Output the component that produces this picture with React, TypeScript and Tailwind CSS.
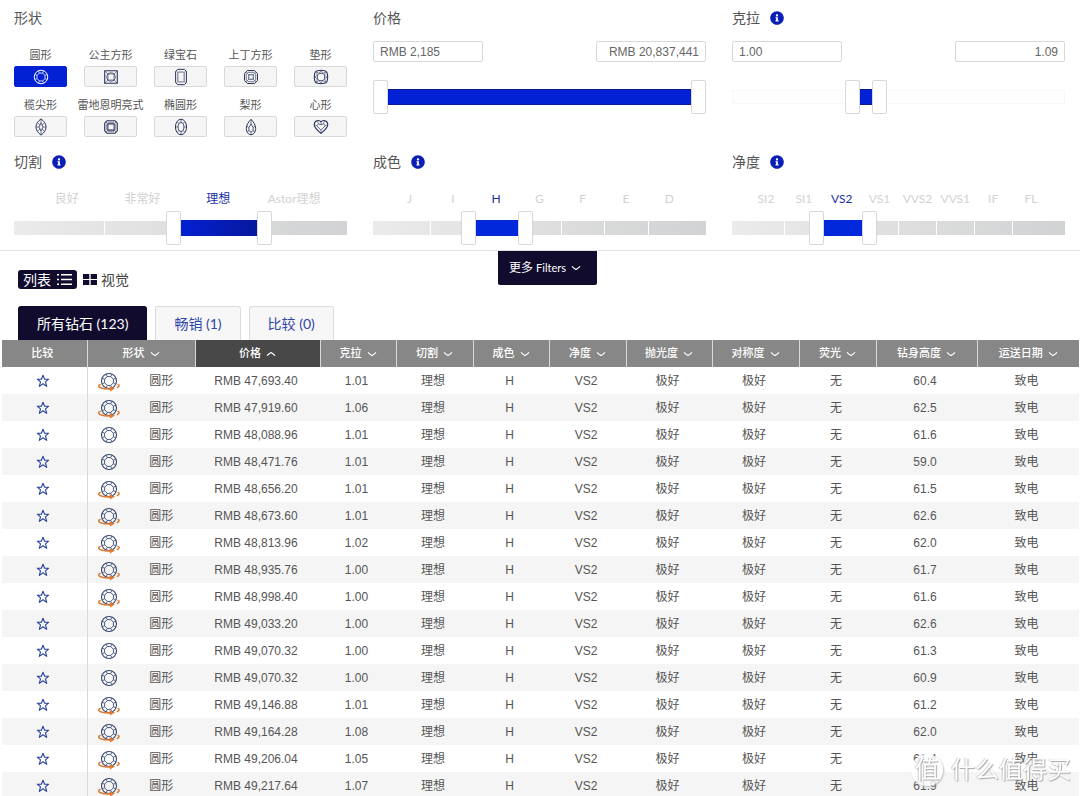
import { useState } from "react";
import { FaInfoCircle } from "react-icons/fa";
import clsx from "clsx";

type ShapeId =
  | "round"
  | "princess"
  | "emerald"
  | "asscher"
  | "cushion"
  | "marquise"
  | "radiant"
  | "oval"
  | "pear"
  | "heart";

interface Shape {
  id: ShapeId;
  label: string;
}

interface Diamond {
  price: string;
  carat: string;
  depth: string;
  has360: boolean;
}

const shapes: Shape[] = [
  { id: "round", label: "圆形" },
  { id: "princess", label: "公主方形" },
  { id: "emerald", label: "绿宝石" },
  { id: "asscher", label: "上丁方形" },
  { id: "cushion", label: "垫形" },
  { id: "marquise", label: "榄尖形" },
  { id: "radiant", label: "雷地恩明亮式" },
  { id: "oval", label: "椭圆形" },
  { id: "pear", label: "梨形" },
  { id: "heart", label: "心形" },
];

const diamonds: Diamond[] = [
  { price: "47,693.40", carat: "1.01", depth: "60.4", has360: true },
  { price: "47,919.60", carat: "1.06", depth: "62.5", has360: true },
  { price: "48,088.96", carat: "1.01", depth: "61.6", has360: false },
  { price: "48,471.76", carat: "1.01", depth: "59.0", has360: false },
  { price: "48,656.20", carat: "1.01", depth: "61.5", has360: true },
  { price: "48,673.60", carat: "1.01", depth: "62.6", has360: true },
  { price: "48,813.96", carat: "1.02", depth: "62.0", has360: true },
  { price: "48,935.76", carat: "1.00", depth: "61.7", has360: true },
  { price: "48,998.40", carat: "1.00", depth: "61.6", has360: true },
  { price: "49,033.20", carat: "1.00", depth: "62.6", has360: false },
  { price: "49,070.32", carat: "1.00", depth: "61.3", has360: false },
  { price: "49,070.32", carat: "1.00", depth: "60.9", has360: false },
  { price: "49,146.88", carat: "1.01", depth: "61.2", has360: true },
  { price: "49,164.28", carat: "1.08", depth: "62.0", has360: true },
  { price: "49,206.04", carat: "1.05", depth: "61.4", has360: true },
  { price: "49,217.64", carat: "1.07", depth: "61.9", has360: true },
];

const columns = [
  { label: "比较", width: "w-[85px]" },
  { label: "形状", width: "w-[108px]", sort: "down" },
  { label: "价格", width: "w-[125px]", sort: "up" },
  { label: "克拉", width: "w-[76px]", sort: "down" },
  { label: "切割", width: "w-[77px]", sort: "down" },
  { label: "成色", width: "w-[76px]", sort: "down" },
  { label: "净度", width: "w-[77px]", sort: "down" },
  { label: "抛光度", width: "w-[86px]", sort: "down" },
  { label: "对称度", width: "w-[87px]", sort: "down" },
  { label: "荧光", width: "w-[77px]", sort: "down" },
  { label: "钻身高度", width: "w-[101px]", sort: "down" },
  { label: "运送日期", width: "w-[102px]", sort: "down" },
];

const tabs = ["所有钻石 (123)", "畅销 (1)", "比较 (0)"];

const RoundCut = () => (
  <>
    <circle cx="10" cy="10" r="7.5" strokeWidth="1.1" />
    <path d="M8.200 5.600h3.600l2.600 2.600v3.600l-2.600 2.600H8.200l-2.600-2.600V8.200z" strokeWidth=".9" />
    <path
      d="M8.200 5.600 7.100 3.100M11.800 5.600l1.100-2.500M14.400 8.200l2.500-1.100M14.400 11.800l2.500 1.100M11.800 14.400l1.100 2.500M8.200 14.400l-1.100 2.500M5.600 11.800l-2.500 1.100M5.600 8.200 3.100 7.100"
      strokeWidth=".8"
    />
  </>
);

const shapePaths: Record<ShapeId, React.ReactNode> = {
  round: <RoundCut />,
  princess: (
    <>
      <path d="M3 3h14v14H3z" strokeWidth="1.2" />
      <path d="M6.5 6.5h7v7h-7z" />
      <path d="m3 3 3.5 3.5M17 3l-3.5 3.5M3 17l3.5-3.5M17 17l-3.5-3.5M10 4.500l3.500 2M10 4.500l-3.500 2M10 15.500l3.500-2M10 15.500l-3.500-2M4.500 10l2-3.500M4.500 10l2 3.500M15.500 10l-2-3.500M15.500 10l-2 3.500" strokeWidth=".6" />
    </>
  ),
  emerald: (
    <>
      <path d="M6.2 1.500h7.6L16 3.700v12.6l-2.200 2.200H6.2L4 16.300V3.700z" strokeWidth="1.1" />
      <path d="M7.2 4.500h5.6l.7.7v9.6l-.7.7H7.2l-.7-.7V5.2z" strokeWidth=".8" />
      <path d="m4.500 3.200 2 1.600M15.500 3.200l-2 1.600M4.500 16.800l2-1.600M15.500 16.800l-2-1.600" strokeWidth=".6" />
    </>
  ),
  asscher: (
    <>
      <path d="M6 2.800h8L17.200 6v8L14 17.200H6L2.800 14V6z" strokeWidth="1.100" />
      <path d="M6.800 4.800h6.400l2 2v6.400l-2 2H6.800l-2-2V6.800z" strokeWidth=".7" />
      <path d="M7.500 7.500h5v5h-5z" />
      <path d="m4.500 4.500 3 3M15.500 4.500l-3 3M4.500 15.500l3-3M15.500 15.500l-3-3" strokeWidth=".6" />
    </>
  ),
  cushion: (
    <>
      <path d="M6 3c2.500-.6 5.500-.6 8 0 1.700.4 2.600 1.300 3 3 .6 2.500.6 5.500 0 8-.4 1.700-1.300 2.600-3 3-2.500.6-5.500.6-8 0-1.700-.4-2.600-1.300-3-3-.6-2.500-.6-5.500 0-8 .4-1.700 1.300-2.600 3-3z" strokeWidth="1.200" />
      <path d="M8 6h4l2 2v4l-2 2H8l-2-2V8z" />
      <path d="M8 6 5 4.500 6 8 3 10l3 2-1 3.500L8 14l2 3 2-3 3 1.500-1-3.500 3-2-3-2 1-3.500L12 6l-2-3z" strokeWidth=".6" />
    </>
  ),
  marquise: (
    <>
      <path d="M10 1c3.600 2.700 5.600 5.700 5.600 9s-2 6.300-5.600 9c-3.600-2.700-5.600-5.700-5.600-9S6.400 3.700 10 1z" strokeWidth="1.100" />
      <path d="m10 5.500 2.300 4.500-2.300 4.500L7.700 10z" />
      <path d="M10 1.200v4.300M10 14.500v4.300M4.700 10h3M12.300 10h3M6.500 5.500 8.900 8M13.500 5.500 11.100 8M6.500 14.500 8.900 12M13.500 14.500 11.100 12" strokeWidth=".7" />
    </>
  ),
  radiant: (
    <>
      <path d="M5.700 3h8.600L17 5.700v8.600L14.300 17H5.700L3 14.300V5.700z" strokeWidth="1.200" />
      <path d="M6.500 6.500h7v7h-7z" strokeWidth="1.200" />
      <path d="m4.400 4.400 2.100 2.100M15.600 4.400l-2.100 2.100M4.400 15.600l2.100-2.100M15.600 15.600l-2.100-2.100M6.500 4.800h7M6.500 15.200h7M4.800 6.500v7M15.200 6.500v7" strokeWidth=".6" />
    </>
  ),
  oval: (
    <>
      <ellipse cx="10" cy="10" rx="6.200" ry="8.600" strokeWidth="1.100" />
      <ellipse cx="10" cy="10" rx="3.200" ry="4.900" />
      <path d="M10 1.500v3.600M10 14.900v3.600M3.800 10h3M13.200 10h3M5.800 4l2.100 2.400M14.200 4l-2.100 2.400M5.800 16l2.100-2.400M14.200 16l-2.100-2.400" strokeWidth=".7" />
    </>
  ),
  pear: (
    <>
      <path d="M10 1.500c3 3 5.200 6.600 5.200 10.300 0 3.700-2.300 6.700-5.200 6.700s-5.200-3-5.200-6.700C4.800 8.100 7 4.500 10 1.500z" strokeWidth="1.100" />
      <path d="m10 6.500 2.400 4.200v3L10 15.700l-2.400-2v-3z" />
      <path d="M10 1.500v5M10 15.700v2.800M5.300 9l2.300 1.700M14.700 9l-2.300 1.700M6.200 16l1.400-2.300M13.800 16l-1.400-2.300" strokeWidth=".7" />
    </>
  ),
  heart: (
    <>
      <path d="M10 4.300C8.200 1.800 2.500 2.300 2.500 7.300c0 4.200 4.500 6.900 7.500 9.900 3-3 7.500-5.700 7.500-9.900 0-5-5.700-5.500-7.500-3z" strokeWidth="1.200" />
      <path d="M7.300 6.500 10 7.500l2.700-1 2 2.200L10 13.500 5.300 8.700z" strokeWidth=".8" />
      <path d="M10 4.500v3M10 13.500v3.500M2.800 7.500l2.500 1.200M17.200 7.500l-2.500 1.200M6 3.300l1.300 3.200M14 3.300l-1.300 3.200" strokeWidth=".6" />
    </>
  ),
};

const ShapeIcon = ({ id }: { id: ShapeId }) => (
  <svg viewBox="0 0 20 20" className="w-[18px] h-[18px]" fill="none" stroke="currentColor" strokeWidth=".9" strokeLinejoin="round">
    {shapePaths[id]}
  </svg>
);

const RowDiamond = ({ has360 }: { has360: boolean }) => (
  <svg viewBox="0 0 24 22" className="w-6 h-[22px]" fill="none" strokeLinejoin="round">
    <g stroke="#34466e" strokeWidth=".9" transform="translate(2 1)">
      <RoundCut />
    </g>
    {has360 && (
      <g stroke="#e07b32" strokeWidth="1.500">
        <path d="M3.600 14.200c-2.600.9-2.600 2.500 0 3.500 2.600 1 6.400 1.500 10.400 1.200" />
        <path d="M20.600 14.200c2.300.9 2.100 2.500-.8 3.500" />
        <path d="m12.500 16.200 5.500 2.300-5 3z" fill="#e07b32" stroke="none" />
      </g>
    )}
  </svg>
);

const Star = () => (
  <svg viewBox="0 0 14 14" className="w-[14px] h-[14px]" fill="none" stroke="#27429c" strokeWidth="1.100" strokeLinejoin="round">
    <path d="m7 1.200 1.600 4h4.100L9.500 7.900l1.200 4.500L7 9.800l-3.700 2.600 1.200-4.500L1.300 5.200h4.100z" />
  </svg>
);

const Chevron = ({ up = false }: { up?: boolean }) => (
  <svg viewBox="0 0 10 6" className={clsx("w-[10px] h-[6px]", up && "rotate-180")} fill="none" stroke="currentColor" strokeWidth="1.200">
    <path d="M1 1.300c1.200 1.300 2.500 2.300 4 3.200 1.500-.9 2.800-1.900 4-3.200" />
  </svg>
);

const FilterTitle = ({ title, info = false }: { title: string; info?: boolean }) => (
  <div className="flex h-5 items-center gap-[10px]">
    <h2 className="text-sm text-[#555]">{title}</h2>
    {info && (
      <button type="button" aria-label={`${title} info`} className="text-[#0c1fb4]">
        <FaInfoCircle className="w-[14px] h-[14px]" />
      </button>
    )}
  </div>
);

interface RangeSliderProps {
  name: string;
  initial: [number, number];
  track: string;
  fill: string;
  segments?: number;
}

const thumbClasses =
  "absolute inset-0 m-0 w-full h-[34px] appearance-none bg-transparent pointer-events-none [&::-webkit-slider-runnable-track]:h-[34px] [&::-webkit-slider-thumb]:pointer-events-auto [&::-webkit-slider-thumb]:appearance-none [&::-webkit-slider-thumb]:w-[15px] [&::-webkit-slider-thumb]:h-[34px] [&::-webkit-slider-thumb]:rounded-[2px] [&::-webkit-slider-thumb]:border [&::-webkit-slider-thumb]:border-[#d8d8d8] [&::-webkit-slider-thumb]:bg-white";

const RangeSlider = ({ name, initial, track, fill, segments = 0 }: RangeSliderProps) => {
  const [low, setLow] = useState(initial[0]);
  const [high, setHigh] = useState(initial[1]);

  return (
    <div className="relative flex h-[34px] items-center">
      <div className={clsx("flex h-[14px] w-full px-[15px]", track)}>
        {Array.from({ length: segments }, (_, i) => (
          <div key={i} className="flex-1 border-r border-white last:border-r-0" />
        ))}
      </div>
      <div
        className={clsx("absolute h-4", fill)}
        style={{
          left: `calc((100% - 15px) * ${low / 1000} + 14px)`,
          right: `calc((100% - 15px) * ${1 - high / 1000} + 14px)`,
        }}
      />
      <input
        type="range"
        min={0}
        max={1000}
        value={low}
        aria-label={`${name} min`}
        onChange={(e) => setLow(Math.min(Number(e.target.value), high))}
        className={thumbClasses}
      />
      <input
        type="range"
        min={0}
        max={1000}
        value={high}
        aria-label={`${name} max`}
        onChange={(e) => setHigh(Math.max(Number(e.target.value), low))}
        className={thumbClasses}
      />
    </div>
  );
};

interface ValueFilterProps {
  title: string;
  info?: boolean;
  min: string;
  max: string;
  initial: [number, number];
}

const ValueFilter = ({ title, info, min, max, initial }: ValueFilterProps) => (
  <section>
    <FilterTitle title={title} info={info} />
    <div className="mt-[13px] mb-[18px] flex justify-between">
      <input
        type="text"
        defaultValue={min}
        aria-label={`${title} min`}
        className="h-[21px] w-[110px] rounded-[2px] border border-[#d8d8d8] px-[6px] text-xs text-[#666]"
      />
      <input
        type="text"
        defaultValue={max}
        aria-label={`${title} max`}
        className="h-[21px] w-[110px] rounded-[2px] border border-[#d8d8d8] px-[6px] text-right text-xs text-[#666]"
      />
    </div>
    <RangeSlider name={title} initial={initial} track="border border-[#f7f7f7] bg-[#fefefe]" fill="bg-[#0220d4] border-y border-[#0a1a8c]" />
  </section>
);

interface GradeFilterProps {
  title: string;
  grades: string[];
  selected: string;
  initial: [number, number];
  fill: string;
}

const GradeFilter = ({ title, grades, selected, initial, fill }: GradeFilterProps) => (
  <section>
    <FilterTitle title={title} info />
    <div className="mt-[19px] mb-1 flex px-[15px] font-[Lato,'Noto_Sans_CJK_SC',sans-serif] text-xs leading-4">
      {grades.map((grade) => (
        <span
          key={grade}
          className={clsx(
            "flex-1 basis-0 text-center whitespace-nowrap",
            grade === selected ? "text-[#1a2fa8]" : "text-[#d2d2d2]"
          )}
        >
          {grade}
        </span>
      ))}
    </div>
    <RangeSlider
      name={title}
      initial={initial}
      track="bg-linear-to-r from-[#ebebeb] to-[#d1d2d3]"
      fill={fill}
      segments={grades.length}
    />
  </section>
);

const ShapeFilter = () => {
  const [active, setActive] = useState<ShapeId>("round");

  return (
    <section>
      <FilterTitle title="形状" />
      <div className="mt-5 grid grid-cols-[repeat(5,53px)] justify-between gap-y-[11px]">
        {shapes.map((shape) => (
          <button
            key={shape.id}
            type="button"
            aria-pressed={shape.id === active}
            onClick={() => setActive(shape.id)}
            className="flex flex-col items-center gap-1 text-[11px] leading-[14px] text-[#555]"
          >
            <span className="whitespace-nowrap">{shape.label}</span>
            <span
              className={clsx(
                "flex h-[21px] w-full items-center justify-center rounded-[2px] border",
                shape.id === active
                  ? "border-[#0220d4] bg-[#0220d4] text-white"
                  : "border-[#d8d8d8] bg-[#f5f5f5] text-[#2b3459]"
              )}
            >
              <ShapeIcon id={shape.id} />
            </span>
          </button>
        ))}
      </div>
    </section>
  );
};

const ResultsTable = () => (
  <table className="w-full table-fixed border-collapse text-center">
    <thead>
      <tr className="h-[27px]">
        {columns.map((col) => (
          <th
            key={col.label}
            scope="col"
            className={clsx(
              "border-r border-[#d8d8d8] p-0 text-[11px] font-medium text-white last:border-r-0",
              col.width,
              col.sort === "up" ? "bg-[#484848]" : "bg-[#878787]"
            )}
          >
            {col.sort ? (
              <button type="button" className="inline-flex items-center gap-[5px]">
                {col.label}
                <Chevron up={col.sort === "up"} />
              </button>
            ) : (
              <span className="pr-1">{col.label}</span>
            )}
          </th>
        ))}
      </tr>
    </thead>
    <tbody className="text-xs text-[#555]">
      {diamonds.map((d, i) => (
        <tr key={i} className="h-[27px] bg-white even:bg-[#f5f5f5]">
          <td className="border-r border-[#d8d8d8] p-0">
            <button type="button" aria-label="比较" className="flex w-full justify-center pr-0.5">
              <Star />
            </button>
          </td>
          <td className="p-0">
            <div className="flex items-center">
              <span className="flex w-[42px] justify-center">
                <RowDiamond has360={d.has360} />
              </span>
              <span className="flex-1 pr-0.5">圆形</span>
            </div>
          </td>
          <td className="p-0 pr-[3px]">RMB {d.price}</td>
          <td className="p-0 pr-[3px]">{d.carat}</td>
          <td className="p-0 pr-[3px]">理想</td>
          <td className="p-0 pr-[3px]">H</td>
          <td className="p-0 pr-[3px]">VS2</td>
          <td className="p-0 pr-[3px]">极好</td>
          <td className="p-0 pr-[3px]">极好</td>
          <td className="p-0 pr-[3px]">无</td>
          <td className="p-0 pr-[3px]">{d.depth}</td>
          <td className="p-0 pr-[3px]">致电</td>
        </tr>
      ))}
    </tbody>
  </table>
);

const App: React.FC = () => {
  const [activeTab, setActiveTab] = useState(0);

  return (
    <div className="h-screen overflow-y-auto bg-white font-['Liberation_Sans','Noto_Sans_CJK_SC',sans-serif] [scrollbar-width:none]">
      <div className="grid grid-cols-3 gap-x-[26px] gap-y-[15px] pt-2 pr-[15px] pb-[5px] pl-[14px]">
        <ShapeFilter />
        <ValueFilter title="价格" min="RMB 2,185" max="RMB 20,837,441" initial={[0, 1000]} />
        <ValueFilter title="克拉" info min="1.00" max="1.09" initial={[355, 441]} />
        <GradeFilter
          title="切割"
          grades={["良好", "非常好", "理想", "Astor理想"]}
          selected="理想"
          initial={[478, 764]}
          fill="bg-linear-to-r from-[#0220d4] to-[#06189c]"
        />
        <GradeFilter
          title="成色"
          grades={["J", "I", "H", "G", "F", "E", "D"]}
          selected="H"
          initial={[277, 457]}
          fill="bg-[#0228dc]"
        />
        <GradeFilter
          title="净度"
          grades={["SI2", "SI1", "VS2", "VS1", "VVS2", "VVS1", "IF", "FL"]}
          selected="VS2"
          initial={[242, 408]}
          fill="bg-[#0228dc]"
        />
      </div>

      <div className="grid grid-cols-[1fr_auto_1fr] items-start border-t border-[#e0e0e0] pl-[18px] pr-1 font-[Lato,'Noto_Sans_CJK_SC',sans-serif]">
        <div className="flex items-center gap-[6px] pt-[19px] text-sm">
          <button type="button" className="flex h-[19px] items-center gap-[6px] rounded-[3px] bg-[#110c2e] px-[5px] text-white">
            列表
            <svg viewBox="0 0 15 13" className="w-[15px] h-[13px]" stroke="currentColor" strokeWidth="1.500">
              <path d="M0 1.800h2M0 6.500h2M0 11.200h2M4 1.800h11M4 6.500h11M4 11.200h11" />
            </svg>
          </button>
          <button type="button" className="flex h-[19px] items-center gap-1 text-[#444]">
            <svg viewBox="0 0 14 11" className="w-[14px] h-[11px] fill-[#110c2e]">
              <path d="M0 0h6.300v5H0zM7.700 0H14v5H7.700zM0 6h6.300v5H0zM7.700 6H14v5H7.700z" />
            </svg>
            视觉
          </button>
        </div>
        <button type="button" className="flex h-[34px] w-[99px] items-center justify-center gap-[5px] rounded-b-[2px] bg-[#110c2e] pr-1 text-xs text-white">
          <span>
            更多 <span className="text-[11px]">Filters</span>
          </span>
          <Chevron />
        </button>
      </div>

      <div role="tablist" className="flex gap-2 pt-[17px] pl-[18px] font-[Lato,'Noto_Sans_CJK_SC',sans-serif] text-sm">
        {tabs.map((tab, i) => (
          <button
            key={tab}
            type="button"
            role="tab"
            aria-selected={i === activeTab}
            onClick={() => setActiveTab(i)}
            className={clsx(
              "h-[34px] rounded-t-[3px] border border-b-0 px-[18px]",
              i === activeTab
                ? "border-[#110c2e] bg-[#110c2e] text-white"
                : "border-[#dcdcdc] bg-[#f7f7f7] text-[#2f44ac]"
            )}
          >
            {tab}
          </button>
        ))}
      </div>

      <div className="pl-[2px] pr-px">
        <ResultsTable />
      </div>

      <div className="pointer-events-none fixed right-[9px] bottom-[10px] flex items-center gap-2 text-2xl leading-8 text-white [text-shadow:1px_1px_1px_#a8a8a8,-1px_0_1px_#c8c8c8]">
        <span className="flex h-8 w-8 items-center justify-center rounded-full bg-white/80 shadow-[1px_1px_2px_#c0c0c0]">值</span>
        <span>什么值得买</span>
      </div>
    </div>
  );
};

export default App;
